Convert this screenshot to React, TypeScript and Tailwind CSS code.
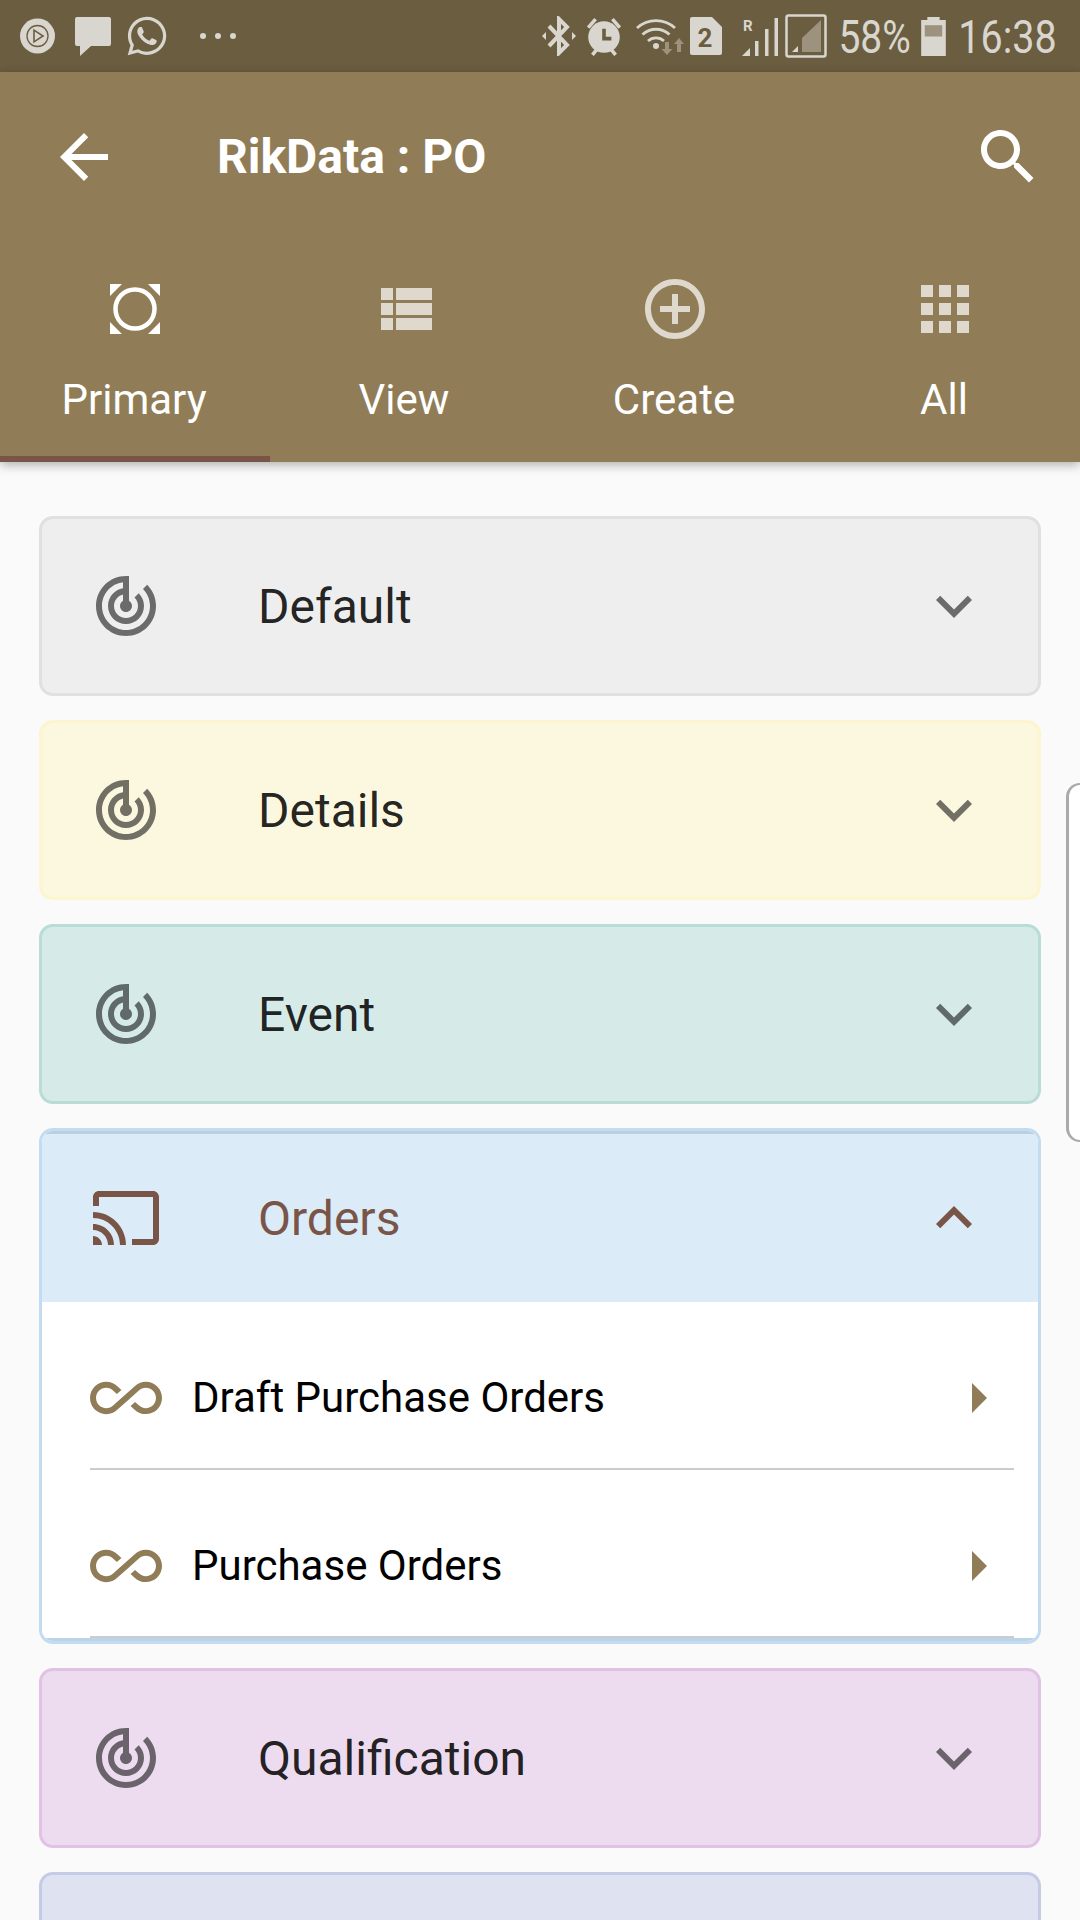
import React from "react";
import { FaWhatsapp } from "react-icons/fa";

const P = {
  track: "M19.07 4.93l-1.41 1.41C19.1 7.79 20 9.79 20 12c0 4.42-3.58 8-8 8s-8-3.58-8-8c0-4.08 3.05-7.44 7-7.93v2.02C8.16 6.57 6 9.03 6 12c0 3.31 2.69 6 6 6s6-2.69 6-6c0-1.66-.67-3.16-1.76-4.24l-1.41 1.41C15.55 9.9 16 10.9 16 12c0 2.21-1.79 4-4 4s-4-1.79-4-4c0-1.86 1.28-3.41 3-3.86v2.14c-.6.35-1 .98-1 1.72 0 1.1.9 2 2 2s2-.9 2-2c0-.74-.4-1.38-1-1.72V2h-1C6.48 2 2 6.48 2 12s4.48 10 10 10 10-4.48 10-10c0-2.76-1.12-5.26-2.93-7.07z",
  cast: "M21 3H3c-1.1 0-2 .9-2 2v3h2V5h18v14h-7v2h7c1.1 0 2-.9 2-2V5c0-1.1-.9-2-2-2zM1 18v3h3c0-1.66-1.34-3-3-3zm0-4v2c2.76 0 5 2.24 5 5h2c0-3.87-3.13-7-7-7zm0-4v2c4.97 0 9 4.03 9 9h2c0-6.08-4.93-11-11-11z",
  down: "M16.59 8.59L12 13.17 7.41 8.59 6 10l6 6 6-6z",
  up: "M12 8l-6 6 1.41 1.41L12 10.83l4.59 4.58L18 14z",
  inf: "M18.6 6.62c-1.44 0-2.8.56-3.77 1.53L12 10.66 10.48 12h.01L7.8 14.39c-.64.64-1.49.99-2.4.99-1.87 0-3.39-1.51-3.39-3.38S3.53 8.62 5.4 8.62c.91 0 1.76.35 2.44 1.03l1.13 1 1.51-1.34L9.22 8.2C8.2 7.18 6.84 6.62 5.4 6.62 2.42 6.62 0 9.04 0 12s2.42 5.38 5.4 5.38c1.44 0 2.8-.56 3.77-1.53l2.83-2.5.01.01L13.52 12h-.01l2.69-2.39c.64-.64 1.49-.99 2.4-.99 1.87 0 3.39 1.51 3.39 3.38s-1.52 3.38-3.39 3.38c-.9 0-1.76-.35-2.44-1.03l-1.14-1.01-1.51 1.34 1.27 1.12c1.02 1.01 2.37 1.57 3.82 1.57 2.98 0 5.4-2.41 5.4-5.38s-2.42-5.37-5.4-5.37z",
  right: "M10 17l5-5-5-5v10z",
  back: "M20 11H7.83l5.59-5.59L12 4l-8 8 8 8 1.41-1.41L7.83 13H20v-2z",
  search: "M15.5 14h-.79l-.28-.27C15.41 12.59 16 11.11 16 9.5 16 5.91 13.09 3 9.5 3S3 5.91 3 9.5 5.91 16 9.5 16c1.61 0 3.09-.59 4.23-1.57l.27.28v.79l5 4.99L20.49 19l-4.99-5zm-6 0C7.01 14 5 11.99 5 9.5S7.01 5 9.5 5 14 7.01 14 9.5 11.99 14 9.5 14z",
  list: "M4 14h4v-4H4v4zm0 5h4v-4H4v4zM4 9h4V5H4v4zm5 5h12v-4H9v4zm0 5h12v-4H9v4zM9 5v4h12V5H9z",
  add: "M13 7h-2v4H7v2h4v4h2v-4h4v-2h-4V7zm-1-5C6.48 2 2 6.48 2 12s4.48 10 10 10 10-4.48 10-10S17.52 2 12 2zm0 18c-4.41 0-8-3.59-8-8s3.59-8 8-8 8 3.59 8 8-3.59 8-8 8z",
  apps: "M4 8h4V4H4v4zm6 12h4v-4h-4v4zm-6 0h4v-4H4v4zm0-6h4v-4H4v4zm6 0h4v-4h-4v4zm6-10v4h4V4h-4zm-6 4h4V4h-4v4zm6 6h4v-4h-4v4zm0 6h4v-4h-4v4z",
};

const C = "#d9d6cf";
const BAR = "#6b5d3f";
const DIM = "#9c927d";

function Md({ d, className }: { d: string; className?: string }) {
  return (
    <svg viewBox="0 0 24 24" className={"w-[72px] h-[72px] shrink-0 fill-current " + (className ?? "")}>
      <path d={d} />
    </svg>
  );
}

function Play() {
  return (
    <svg width="35" height="36" viewBox="0 0 35 36" className="shrink-0">
      <circle cx="17.5" cy="18" r="17.5" fill={C} />
      <circle cx="17.5" cy="18" r="10.5" fill="none" stroke={BAR} strokeWidth="1.3" />
      <path d="M14 12.2v11.6l9-5.8z" fill="none" stroke={BAR} strokeWidth="1.6" />
    </svg>
  );
}
function Msg() {
  return (
    <svg width="36" height="39" viewBox="0 0 36 39" className="shrink-0">
      <path d="M2 0h32a2 2 0 0 1 2 2v25a2 2 0 0 1-2 2H16L5 39V29H2a2 2 0 0 1-2-2V2a2 2 0 0 1 2-2z" fill={C} />
    </svg>
  );
}
function Bt() {
  return (
    <svg width="34" height="40" viewBox="0 0 34 40" className="shrink-0">
      <path d="M7 10l18 19-8 8V3l8 8L7 30" fill="none" stroke={C} strokeWidth="4" />
      <path d="M0 20l4-4v8zM34 20l-4-4v8z" fill={C} />
    </svg>
  );
}
function Alarm() {
  return (
    <svg width="38" height="40" viewBox="0 0 36 38" className="shrink-0">
      <path d="M3 11L10 3M33 11L26 3M7 37l4-5M29 37l-4-5" stroke={C} strokeWidth="3.4" fill="none" />
      <circle cx="18" cy="20" r="15" fill={C} />
      <path d="M18 12v9.5h7" fill="none" stroke={BAR} strokeWidth="3.4" />
    </svg>
  );
}
function Wifi() {
  return (
    <svg width="48" height="38" viewBox="0 0 48 38" className="shrink-0">
      <g fill="none" stroke={C} strokeWidth="2.8">
        <path d="M1 11A28 28 0 0 1 39 11" />
        <path d="M6.5 17.5A20 20 0 0 1 33.5 17.5" />
        <path d="M12 24A12 12 0 0 1 28 24" />
      </g>
      <circle cx="20" cy="29" r="3" fill={C} />
      <path d="M29 25h4v7h3.5l-5.500 6-5.500-6H29zM41 35h4v-8h3l-5-6-5 6h3z" fill={DIM} />
    </svg>
  );
}
function Sim() {
  return (
    <svg width="32" height="38" viewBox="0 0 32 38" className="shrink-0">
      <path d="M2 0h20l10 10v26a2 2 0 0 1-2 2H2a2 2 0 0 1-2-2V2a2 2 0 0 1 2-2z" fill={C} />
      <text x="15" y="30" textAnchor="middle" fontFamily="Roboto" fontWeight="700" fontSize="26" fill={BAR}>2</text>
    </svg>
  );
}
function Signal() {
  return (
    <svg width="36" height="40" viewBox="0 0 36 40" className="shrink-0">
      <text x="1" y="15" fontFamily="Roboto" fontWeight="700" fontSize="15" fill={C}>R</text>
      <path d="M0 40l8-8v8z" fill={C} />
      <rect x="13" y="25" width="3.500" height="15" fill={C} />
      <rect x="23" y="13" width="3.500" height="27" fill={C} />
      <rect x="32.500" y="2" width="3.500" height="38" fill={C} />
    </svg>
  );
}
function BoxSignal() {
  return (
    <svg width="42" height="44" viewBox="0 0 42 44" className="shrink-0">
      <rect x="1.500" y="1.500" width="39" height="41" rx="2" fill="none" stroke={C} strokeWidth="2.500" />
      <path d="M17 38V24L36 6v32z" fill={DIM} />
      <path d="M7 38l6-6v6z" fill={C} />
    </svg>
  );
}
function Battery() {
  return (
    <svg width="25" height="39" viewBox="0 0 24 38" className="shrink-0">
      <path d="M6 0h12v3h6v35H0V3h6z" fill={C} />
      <rect x="3.500" y="8" width="17" height="11" fill={DIM} />
    </svg>
  );
}

function StatusText({ children, w, cls }: { children: React.ReactNode; w: string; cls: string }) {
  return (
    <div className={"flex justify-center whitespace-nowrap text-[47px] leading-none shrink-0 " + w}>
      <span className={cls}>{children}</span>
    </div>
  );
}

function StatusBar() {
  return (
    <div className="h-[72px] bg-[#6b5d3f] flex items-center justify-between pl-[20px] pr-[25px] text-[#d9d6cf]">
      <div className="flex items-center">
        <Play />
        <div className="ml-[20px]"><Msg /></div>
        <FaWhatsapp className="ml-[14px] w-[44px] h-[44px]" />
        <div className="ml-[31px] flex gap-[9px]">
          <span className="w-[6px] h-[6px] rounded-full bg-[#d9d6cf]" />
          <span className="w-[6px] h-[6px] rounded-full bg-[#d9d6cf]" />
          <span className="w-[6px] h-[6px] rounded-full bg-[#d9d6cf]" />
        </div>
      </div>
      <div className="flex items-center">
        <Bt />
        <div className="ml-[9px]"><Alarm /></div>
        <div className="ml-[13px]"><Wifi /></div>
        <div className="ml-[6px]"><Sim /></div>
        <div className="ml-[20px]"><Signal /></div>
        <div className="ml-[7px]"><BoxSignal /></div>
        <div className="ml-[14px]"><StatusText w="w-[68px]" cls="scale-x-[0.83]">58%</StatusText></div>
        <div className="ml-[12px]"><Battery /></div>
        <div className="ml-[14px]"><StatusText w="w-[95px]" cls="scale-x-[0.84]">16:38</StatusText></div>
      </div>
    </div>
  );
}

function Lens() {
  return (
    <svg width="50" height="50" viewBox="0 0 50 50" className="fill-white">
      <circle cx="25" cy="25" r="19.500" fill="none" stroke="white" strokeWidth="4.500" />
      <path d="M0 0h12L0 12zM50 0H38l12 12zM0 50h12L0 38zM50 50H38l12-12z" />
    </svg>
  );
}

const tabs = [
  { label: "Primary", icon: <div className="w-[72px] h-[72px] flex items-center justify-center"><Lens /></div>, active: true },
  { label: "View", icon: <Md d={P.list} className="text-white/70" /> },
  { label: "Create", icon: <Md d={P.add} className="text-white/70" /> },
  { label: "All", icon: <Md d={P.apps} className="text-white/70" /> },
];

function AppBar() {
  return (
    <div className="relative z-10 bg-[#907d58] text-white shadow-[0_3px_10px_rgba(0,0,0,0.3)]">
      <div className="h-[170px] flex items-center pl-[48px] pr-[36px]">
        <Md d={P.back} />
        <div className="ml-[97px] flex-1 text-[48px] font-bold leading-none">RikData : PO</div>
        <Md d={P.search} />
      </div>
      <div className="grid grid-cols-4">
        {tabs.map((t) => (
          <div
            key={t.label}
            className={
              "h-[220px] flex flex-col items-center pt-[31px] border-b-[6px] " +
              (t.active ? "border-[#795548]" : "border-transparent")
            }
          >
            {t.icon}
            <div className="mt-[31px] pr-[2px] text-[42px] leading-[48px]">{t.label}</div>
          </div>
        ))}
      </div>
    </div>
  );
}

function Card({ title, bg, border }: { title: string; bg: string; border: string }) {
  return (
    <div className={"h-[180px] shrink-0 rounded-[14px] border-[3px] flex items-center pl-[48px] pr-[48px] " + bg + " " + border}>
      <Md d={P.track} className="text-black/55" />
      <div className="ml-[96px] pt-[2px] flex-1 text-[48px] leading-none text-black/87">{title}</div>
      <Md d={P.down} className="text-black/55" />
    </div>
  );
}

function Row({ label }: { label: string }) {
  return (
    <div className="ml-[48px] mr-[24px] h-[168px] pt-[26px] flex items-center border-b-[2px] border-[#c9cdd0]">
      <Md d={P.inf} className="text-[#907d58]" />
      <div className="ml-[30px] flex-1 text-[42px] leading-none text-black">{label}</div>
      <Md d={P.right} className="text-[#907d58]" />
    </div>
  );
}

function Orders() {
  return (
    <div className="h-[516px] shrink-0 rounded-[14px] border-[3px] border-[#c3dcf2] bg-white overflow-hidden flex flex-col">
      <div className="h-[171px] shrink-0 bg-[#dcebf8] border-t-[3px] border-[#bccfe0] flex items-center pl-[48px] pr-[48px] text-[#795548]">
        <Md d={P.cast} />
        <div className="ml-[96px] pt-[2px] flex-1 text-[48px] leading-none">Orders</div>
        <Md d={P.up} />
      </div>
      <Row label="Draft Purchase Orders" />
      <Row label="Purchase Orders" />
      <div className="h-[3px] bg-[#bdd3e7]" />
    </div>
  );
}

export default function App() {
  return (
    <div className="relative h-[1920px] w-[1080px] overflow-hidden bg-[#fafafa] font-['Roboto',sans-serif]">
      <StatusBar />
      <AppBar />
      <div className="flex flex-col gap-[24px] px-[39px] pt-[54px]">
        <Card title="Default" bg="bg-[#eeeeee]" border="border-[#e0e0e0]" />
        <Card title="Details" bg="bg-[#fcf8df]" border="border-[#fcf5cf]" />
        <Card title="Event" bg="bg-[#d6ebe8]" border="border-[#b9dcd7]" />
        <Orders />
        <Card title="Qualification" bg="bg-[#eddbef]" border="border-[#e1c2e5]" />
        <Card title="" bg="bg-[#dfe2f1]" border="border-[#c5cbe5]" />
      </div>
      <div className="absolute right-0 top-[783px] h-[359px] w-[14px] rounded-l-[14px] border-y-[2px] border-l-[3px] border-[#aaaaaa] bg-white" />
    </div>
  );
}
